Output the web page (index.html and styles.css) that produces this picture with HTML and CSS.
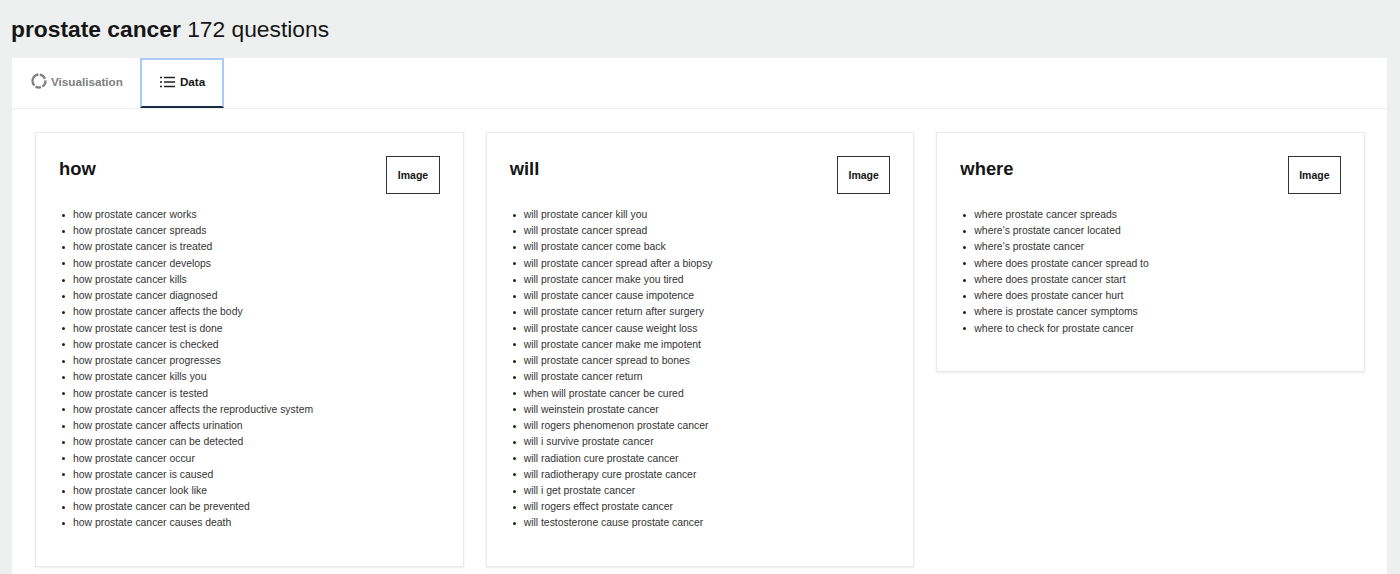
FILE: index.html
```html
<!DOCTYPE html>
<html lang="en">
<head>
  <meta charset="UTF-8">
  <meta name="viewport" content="width=device-width, initial-scale=1.0">
  <title>prostate cancer | 172 questions</title>
  <link rel="stylesheet" href="styles.css">
</head>
<body>
  <h1 class="page-title"><strong>prostate cancer</strong> 172 questions</h1>

  <div class="panel">
    <div class="tabs">
      <a class="tab" href="#">
        <svg class="tab-icon" width="16" height="16" viewBox="0 0 16 16" fill="none" stroke="#808080" stroke-width="2.3">
          <path d="M8.9 1.6a6.5 6.5 0 0 1 5 4.2"/>
          <path d="M14.4 7.4a6.5 6.5 0 0 1-3.1 6.2"/>
          <path d="M10 14.2a6.5 6.5 0 0 1-5.4-.7"/>
          <path d="M3.4 12.5a6.5 6.5 0 0 1 4.1-11"/>
        </svg>
        Visualisation
      </a>
      <a class="tab active" href="#">
        <svg class="tab-icon" width="15" height="12" viewBox="0 0 15 12" fill="none" stroke="#222" stroke-width="1.4">
          <path d="M0 1.5h2M4 1.5h11M0 6h2M4 6h11M0 10.5h2M4 10.5h11"/>
        </svg>
        Data
      </a>
    </div>

    <div class="cards">
      <div class="card">
        <div class="card-head">
          <h2>how</h2>
          <button type="button">Image</button>
        </div>
        <ul>
          <li>how prostate cancer works</li>
          <li>how prostate cancer spreads</li>
          <li>how prostate cancer is treated</li>
          <li>how prostate cancer develops</li>
          <li>how prostate cancer kills</li>
          <li>how prostate cancer diagnosed</li>
          <li>how prostate cancer affects the body</li>
          <li>how prostate cancer test is done</li>
          <li>how prostate cancer is checked</li>
          <li>how prostate cancer progresses</li>
          <li>how prostate cancer kills you</li>
          <li>how prostate cancer is tested</li>
          <li>how prostate cancer affects the reproductive system</li>
          <li>how prostate cancer affects urination</li>
          <li>how prostate cancer can be detected</li>
          <li>how prostate cancer occur</li>
          <li>how prostate cancer is caused</li>
          <li>how prostate cancer look like</li>
          <li>how prostate cancer can be prevented</li>
          <li>how prostate cancer causes death</li>
        </ul>
      </div>

      <div class="card">
        <div class="card-head">
          <h2>will</h2>
          <button type="button">Image</button>
        </div>
        <ul>
          <li>will prostate cancer kill you</li>
          <li>will prostate cancer spread</li>
          <li>will prostate cancer come back</li>
          <li>will prostate cancer spread after a biopsy</li>
          <li>will prostate cancer make you tired</li>
          <li>will prostate cancer cause impotence</li>
          <li>will prostate cancer return after surgery</li>
          <li>will prostate cancer cause weight loss</li>
          <li>will prostate cancer make me impotent</li>
          <li>will prostate cancer spread to bones</li>
          <li>will prostate cancer return</li>
          <li>when will prostate cancer be cured</li>
          <li>will weinstein prostate cancer</li>
          <li>will rogers phenomenon prostate cancer</li>
          <li>will i survive prostate cancer</li>
          <li>will radiation cure prostate cancer</li>
          <li>will radiotherapy cure prostate cancer</li>
          <li>will i get prostate cancer</li>
          <li>will rogers effect prostate cancer</li>
          <li>will testosterone cause prostate cancer</li>
        </ul>
      </div>

      <div class="card">
        <div class="card-head">
          <h2>where</h2>
          <button type="button">Image</button>
        </div>
        <ul>
          <li>where prostate cancer spreads</li>
          <li>where's prostate cancer located</li>
          <li>where's prostate cancer</li>
          <li>where does prostate cancer spread to</li>
          <li>where does prostate cancer start</li>
          <li>where does prostate cancer hurt</li>
          <li>where is prostate cancer symptoms</li>
          <li>where to check for prostate cancer</li>
        </ul>
      </div>
    </div>
  </div>
</body>
</html>
```

FILE: styles.css
```css
body {
  font-family: 'Liberation Sans', Arial, sans-serif;
  margin: 0;
  height: 574px;
  overflow: hidden;
  background: #eef0f0;
  color: #161616;
}
.page-title {
  margin: 0;
  padding: 16px 11px 0;
  height: 42px;
  font-size: 22.8px;
  line-height: 26px;
  font-weight: normal;
}
.panel {
  margin: 0 13px 0 12px;
  height: 516px;
  background: #fff;
}
.tabs {
  display: flex;
  height: 50px;
  border-bottom: 1px solid #eceeee;
}
.tab {
  display: flex;
  align-items: center;
  gap: 4px;
  padding: 0 17px 4px 19px;
  font-size: 11.7px;
  font-weight: bold;
  color: #808080;
  text-decoration: none;
}
.tab.active {
  gap: 5px;
  color: #161616;
  padding: 0 17px 3px 18px;
  height: 50px;
  box-sizing: border-box;
  border: 2px solid #a9cbfb;
  border-bottom: 2px solid #1c2b41;
}
.cards {
  display: flex;
  align-items: flex-start;
  gap: 22px;
  padding: 23px 22px 0 23px;
}
.card {
  flex: 1;
  box-sizing: border-box;
  padding: 23px 23px 34px;
  background: #fff;
  border: 1px solid #e8eaea;
  box-shadow: 0 1px 2px rgba(0, 0, 0, 0.08);
}
.card-head {
  display: flex;
  justify-content: space-between;
  align-items: flex-start;
  margin-bottom: 13px;
}
.card-head h2 {
  margin: 0;
  font-size: 18.4px;
  line-height: 26px;
}
.card-head button {
  width: 53.4px;
  height: 38px;
  padding: 0;
  background: #fff;
  border: 1px solid #333;
  font-family: inherit;
  font-size: 10.5px;
  font-weight: bold;
  color: #161616;
}
.card ul {
  margin: 0;
  padding: 0 0 0 3px;
  list-style: none;
  font-size: 10.4px;
  line-height: 16.24px;
  color: #333;
}
.card li {
  display: flex;
  align-items: center;
  gap: 8px;
}
.card li::before {
  content: "";
  width: 3px;
  height: 3px;
  border-radius: 50%;
  background: #222;
}
```
